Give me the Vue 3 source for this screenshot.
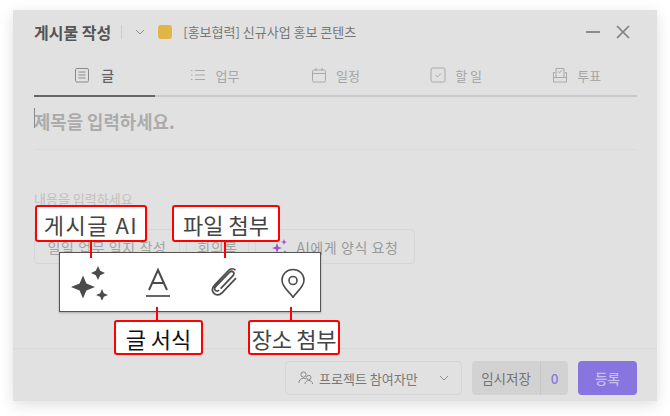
<script setup>
const tabs = [
  { label: '글', active: true, icon: 'doc' },
  { label: '업무', icon: 'list' },
  { label: '일정', icon: 'cal' },
  { label: '할 일', icon: 'check' },
  { label: '투표', icon: 'vote' },
]
</script>

<template>
  <div class="stage">
    <section class="modal">
      <header class="head">
        <h1 class="title">게시물 작성</h1>
        <span class="sep"></span>
        <svg class="chev" width="10" height="6" viewBox="0 0 10 6"><path d="M1 1l4 4 4-4" fill="none" stroke="#8f8f8f" stroke-width="1"/></svg>
        <span class="dot"></span>
        <span class="proj">[홍보협력] 신규사업 홍보 콘텐츠</span>
        <span class="spacer"></span>
        <span class="min"></span>
        <svg class="close" width="14" height="14" viewBox="0 0 14 14"><path d="M1 1l12 12M13 1L1 13" stroke="#7d7d7d" stroke-width="1.6" fill="none"/></svg>
      </header>

      <nav class="tabs">
        <div v-for="t in tabs" :key="t.label" class="tab" :class="{ on: t.active }">
          <svg width="16" height="16" viewBox="0 0 16 16" fill="none" :stroke="t.active ? '#8a8a8a' : '#a9a9a9'" stroke-width="1">
            <template v-if="t.icon === 'doc'"><rect x="1.5" y="1.5" width="13" height="13.5" rx="1.5"/><path d="M4.500 5h7M4.500 8h7M4.500 11h7"/></template>
            <template v-else-if="t.icon === 'list'"><path d="M5 3.500h10M5 8h10M5 12.500h10M1 3.500h1.500M1 8h1.500M1 12.500h1.500"/></template>
            <template v-else-if="t.icon === 'cal'"><rect x="1.5" y="3" width="13" height="12" rx="1.5"/><path d="M1.500 6.500h13M5 .8v3M11 .8v3"/></template>
            <template v-else-if="t.icon === 'check'"><rect x="1" y="1" width="14" height="14" rx="1.5"/><path d="M5.500 8l2 2 3.500-3.500"/></template>
            <template v-else><path d="M3.500 5.500H1.500v9.500h13V5.500h-2M1.500 10.500h13"/><path d="M4 10V1.500h8V10"/><path d="M6 4.500l1.500 1.300L10 3.200"/></template>
          </svg>
          <span>{{ t.label }}</span>
        </div>
      </nav>

      <div class="body">
        <div class="subject"><span class="caret"></span>제목을 입력하세요.</div>
        <p class="hint">내용을 입력하세요</p>
        <div class="chips">
          <span class="chip c1">일일 업무 일지 작성</span>
          <span class="chip c2">회의록</span>
          <span class="chip c3">
            <svg width="18" height="18" viewBox="0 0 18 18" fill="#a04fc4"><path d="M6 5l1.300 3.700L11 10l-3.700 1.300L6 15l-1.300-3.700L1 10l3.700-1.300z"/><path d="M13 1l.8 2.200L16 4l-2.200.8L13 7l-.8-2.200L10 4l2.200-.8z"/><path d="M14 12l.5 1.500L16 14l-1.500.5L14 16l-.5-1.500L12 14l1.500-.5z"/></svg>
            AI에게 양식 요청
          </span>
        </div>
      </div>

      <footer class="foot">
        <div class="scope">
          <svg width="16" height="14" viewBox="0 0 16 14" fill="none" stroke="#8a8a8a" stroke-width="1"><circle cx="5.500" cy="3.500" r="2.600"/><path d="M.8 12c.3-3 2-4.700 4.700-4.700 1 0 1.800.2 2.500.7"/><circle cx="10.800" cy="6.500" r="2.200"/><path d="M7 13c.2-2.200 1.700-3.500 3.800-3.500s3.600 1.300 3.800 3.500"/></svg>
          <span>프로젝트 참여자만</span>
          <svg class="down" width="10" height="6" viewBox="0 0 10 6"><path d="M1 1l4 4 4-4" fill="none" stroke="#8f8f8f" stroke-width="1"/></svg>
        </div>
        <div class="draft"><span class="d1">임시저장</span><span class="d2">0</span></div>
        <button class="post">등록</button>
      </footer>
    </section>

    <div class="toolbar">
      <svg class="i-spark" width="38" height="36" viewBox="0 0 38 36" fill="#4b4b4b"><path d="M12 11.500l3.400 8.100 8.600 3.400-8.600 3.400L12 34.500l-3.400-8.100L0 23l8.600-3.400z"/><path d="M27 2l2.200 4.800L34 9l-4.800 2.200L27 16l-2.200-4.800L20 9l4.800-2.200z"/><path d="M31 25l1.800 4.200L37 31l-4.200 1.800L31 37l-1.800-4.200L25 31l4.200-1.800z"/></svg>
      <svg width="26" height="32" viewBox="0 0 26 32" fill="none" stroke="#4b4b4b" stroke-width="2"><path d="M4 24L13 4l9 20M7 17h12"/><path d="M1 30h24" stroke-width="1.700"/></svg>
      <svg class="i-clip" width="28" height="30" viewBox="0 0 28 30" fill="none" stroke="#4b4b4b" stroke-width="1.700"><path d="M24.500 3.200c-2-2.200-5-1.800-7 .3L3.800 17.800c-3.200 3.400-2.800 6.600-.8 8.600s5.200 2.400 8.200-.8L25 11.200M8 23.200c-1.300 1.200-3 1-3.800 0-.8-.9-.8-2.300.4-3.600L18.600 5.200c1.200-1.200 2.500-1.200 3.600-.2 1 1 1 2.300-.2 3.600L9.600 21.600"/></svg>
      <svg class="i-pin" width="24" height="32" viewBox="0 0 24 32" fill="none" stroke="#4b4b4b" stroke-width="1.600"><path d="M12 31.500C10 27 1 22 1 14 1 8 6 3.500 12 3.500S23 8 23 14c0 8-9 13-11 17.500z"/><circle cx="12" cy="14.500" r="4"/></svg>
    </div>

    <div class="note n1">게시글 AI</div>
    <div class="note n2">파일 첨부</div>
    <div class="note n3">글 서식</div>
    <div class="note n4">장소 첨부</div>
    <i class="stem s1"></i>
    <i class="stem s2"></i>
    <i class="stem s3"></i>
    <i class="stem s4"></i>
  </div>
</template>

<style>
html, body { margin: 0; background: #fff; }
</style>

<style scoped>
.stage {
  position: relative;
  width: 670px;
  height: 416px;
  padding: 10px 13px 15px;
  box-sizing: border-box;
  overflow: hidden;
  font-family: "Noto Sans CJK KR", "Noto Sans", sans-serif;
  background: #fff;
}
.modal {
  height: 391px;
  display: flex;
  flex-direction: column;
  background: #e1e1e1;
  box-shadow: 0 4px 14px rgba(0, 0, 0, .13);
}
.head {
  height: 44px;
  padding: 0 27px 0 21px;
  display: flex;
  align-items: center;
}
.title { margin: 0; font-size: 16px; font-weight: 700; color: #555; }
.sep { width: 1px; height: 14px; background: #cdcdcd; margin: 0 13px 0 10px; }
.chev { margin-right: 13px; }
.dot { width: 14px; height: 14px; border-radius: 3px; background: #e2b646; margin-right: 11px; }
.proj { font-size: 13px; color: #777; margin-top: -1px; }
.spacer { flex: 1; }
.min { width: 14px; height: 2px; background: #8a8a8a; margin-right: 16px; }
.tabs {
  margin: 0 20px 0 21px;
  height: 41px;
  display: grid;
  grid-template-columns: repeat(5, 1fr);
  border-bottom: 2px solid #c9c9c9;
}
.tab {
  display: flex;
  align-items: center;
  justify-content: center;
  gap: 9px;
  font-size: 13px;
  color: #a5a5a5;
  margin-bottom: -2px;
  border-bottom: 2px solid transparent;
  padding-top: 1px;
}
.tab.on { color: #666; border-bottom-color: #666; font-weight: 500; font-size: 14px; gap: 11px; }
.body { flex: 1; padding: 0 20px 0 21px; min-height: 0; }
.subject {
  height: 53px;
  box-sizing: border-box;
  padding-bottom: 5px;
  display: flex;
  align-items: center;
  font-size: 17.800px;
  font-weight: 700;
  color: #ababab;
  border-bottom: 1px solid #dadada;
  position: relative;
}
.caret { position: absolute; left: 0; top: 11px; width: 1px; height: 20px; background: #8a8a8a; }
.hint { margin: 40px 0 0; font-size: 13px; line-height: 18px; color: #c0c0c0; }
.chips { display: flex; gap: 6px; margin-top: 21px; }
.chip {
  height: 35px;
  box-sizing: border-box;
  border: 1px solid #d6d6d6;
  border-radius: 4px;
  display: flex;
  align-items: center;
  justify-content: center;
  font-size: 14px;
  letter-spacing: .6px;
  color: #a3a3a3;
}
.c1 { width: 146px; }
.c2 { width: 63px; }
.c3 { width: 160px; gap: 7px; color: #9a9a9a; }
.foot {
  height: 53px;
  box-sizing: border-box;
  border-top: 1px solid #d8d8d8;
  padding: 6px 20px 0 0;
  display: flex;
  align-items: center;
  justify-content: flex-end;
}
.scope {
  width: 177px;
  height: 34px;
  box-sizing: border-box;
  margin-right: 10px;
  padding: 0 12px;
  border: 1px solid #d6d6d6;
  border-radius: 4px;
  display: flex;
  align-items: center;
  gap: 5px;
  font-size: 13px;
  color: #777;
}
.down { margin-left: auto; }
.draft {
  width: 96px;
  height: 34px;
  margin-right: 10px;
  border-radius: 4px;
  background: #d2d2d2;
  display: flex;
  align-items: center;
  font-size: 13.500px;
  color: #747474;
}
.d1 { width: 68px; line-height: 34px; text-align: center; border-right: 1px solid #c6c6c6; }
.d2 { flex: 1; text-align: center; color: #8a78de; font-weight: 500; }
.post {
  width: 59px;
  height: 34px;
  padding: 0;
  border: 0;
  border-radius: 4px;
  background: #8975e0;
  color: #c9c2ea;
  font: 500 13.500px "Noto Sans CJK KR", sans-serif;
}
.toolbar {
  position: absolute;
  left: 59px;
  top: 252px;
  width: 262px;
  height: 60px;
  box-sizing: border-box;
  background: #fff;
  border: 1px solid #555;
  box-shadow: 0 1px 2px rgba(0, 0, 0, .25);
  display: grid;
  grid-template-columns: 64px 68px 67px 63px;
  align-items: center;
  justify-items: center;
}
.i-spark { margin-right: 4px; }
.i-clip { margin-right: 2px; }
.i-pin { margin-left: 4px; }
.note {
  position: absolute;
  box-sizing: border-box;
  background: #fff;
  border: 2.500px solid #f00;
  border-radius: 3px;
  display: flex;
  align-items: center;
  justify-content: center;
  color: #444;
  white-space: nowrap;
  font-size: 22px;
}
.n1 { left: 35px; top: 205px; width: 112px; height: 37px; letter-spacing: 1.500px; }
.n2 { left: 172px; top: 205px; width: 108px; height: 37px; }
.n3 { left: 114px; top: 320px; width: 89px; height: 35px; color: #111; }
.n4 { left: 248px; top: 320px; width: 92px; height: 35px; letter-spacing: -.3px; }
.stem { position: absolute; width: 2px; background: #f00; }
.s1 { left: 90px; top: 242px; height: 16px; }
.s2 { left: 224px; top: 241px; height: 17px; }
.s3 { left: 156px; top: 307px; height: 13px; }
.s4 { left: 290px; top: 307px; height: 13px; }
</style>
